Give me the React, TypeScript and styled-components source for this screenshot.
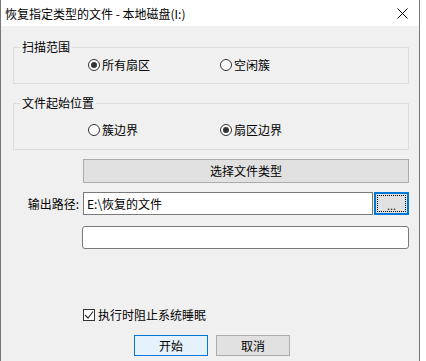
import React from "react";
import styled, { createGlobalStyle } from "styled-components";

const Global = createGlobalStyle`
  html, body { margin: 0; padding: 0; background: #ffffff; }
  body { font-family: "Noto Sans CJK SC", "Noto Sans", sans-serif; font-size: 12px; color: #000; }
  * { box-sizing: border-box; }
`;

const Window = styled.div`
  width: 420px;
  height: 361px;
  border-left: 1px solid #777777;
  border-right: 1px solid #777777;
  display: flex;
  flex-direction: column;
  overflow: hidden;
`;

const TitleBar = styled.div`
  height: 26px;
  background: #ffffff;
  display: flex;
  align-items: center;
  padding-left: 4px;
  flex-shrink: 0;
`;

const TitleText = styled.div`
  flex: 1;
  font-size: 12px;
  line-height: 14px;
  padding-top: 1px;
  white-space: nowrap;
`;

const CloseBox = styled.div`
  width: 46px;
  height: 26px;
  display: flex;
  align-items: center;
  justify-content: center;
  padding-left: 12px;
`;

const Body = styled.div`
  flex: 1;
  background: #f0f0f0;
  padding: 14px 10px 0 12px;
  display: flex;
  flex-direction: column;
`;

const Group = styled.fieldset<{ $gapTop: number; $padBottom: number; $rowTop: number }>`
  margin: ${(p) => p.$gapTop}px 0 0 0;
  padding: 0 0 ${(p) => p.$padBottom}px 6px;
  border: 1px solid #dcdcdc;
  min-width: 0;
  & > div { margin-top: ${(p) => p.$rowTop}px; }
`;

const Legend = styled.legend`
  padding: 0 2px;
  font-size: 12px;
  line-height: 14px;
`;

const RadioRow = styled.div`
  display: grid;
  grid-template-columns: 132px auto;
  padding-left: 68px;
  height: 14px;
  align-items: center;
`;

const Choice = styled.label`
  display: flex;
  align-items: center;
  gap: 2px;
  line-height: 14px;
`;

const RadioDot = styled.span<{ $on?: boolean }>`
  width: 12px;
  height: 12px;
  border-radius: 50%;
  border: 1px solid #333333;
  background: #ffffff;
  display: flex;
  align-items: center;
  justify-content: center;
  &::after {
    content: "";
    width: 6px;
    height: 6px;
    border-radius: 50%;
    background: ${(p) => (p.$on ? "#333333" : "transparent")};
  }
`;

const WideButton = styled.div`
  margin: 9px 0 0 70px;
  height: 24px;
  background: #e1e1e1;
  border: 1px solid #adadad;
  display: flex;
  align-items: center;
  justify-content: center;
  line-height: 14px;
`;

const PathRow = styled.div`
  margin-top: 9px;
  display: grid;
  grid-template-columns: 70px 1fr 35px;
  column-gap: 1px;
  height: 23px;
`;

const PathLabel = styled.div`
  display: flex;
  align-items: center;
  justify-content: flex-end;
  padding-right: 4px;
  line-height: 14px;
`;

const TextBox = styled.div`
  background: #ffffff;
  border: 1px solid #7a7a7a;
  display: flex;
  align-items: center;
  padding-left: 3px;
  line-height: 14px;
  margin-left: -1px;
`;

const BrowseButton = styled.div`
  position: relative;
  background: #e1e1e1;
  border: 2px solid #0078d7;
  display: flex;
  align-items: center;
  justify-content: center;
  font-size: 11px;
  line-height: 12px;
  padding-top: 2px;
  color: #222;
  &::after {
    content: "";
    position: absolute;
    inset: 1px;
    border: 1px dotted #000000;
  }
`;

const StatusBox = styled.div`
  margin: 11px 0 0 69px;
  height: 23px;
  background: #ffffff;
  border: 1px solid #7a7a7a;
  border-radius: 3px;
`;

const CheckRow = styled.label`
  margin: 59px 0 0 70px;
  display: flex;
  align-items: center;
  gap: 3px;
  height: 14px;
  line-height: 14px;
`;

const CheckBox = styled.span`
  width: 12px;
  height: 12px;
  border: 1px solid #333333;
  background: #ffffff;
  display: flex;
  align-items: center;
  justify-content: center;
`;

const ButtonRow = styled.div`
  margin: 13px 0 0 121px;
  display: flex;
  gap: 8px;
`;

const DialogButton = styled.div<{ $primary?: boolean }>`
  width: 74px;
  height: 21px;
  background: ${(p) => (p.$primary ? "#e5f1fb" : "#e1e1e1")};
  border: 1px solid ${(p) => (p.$primary ? "#0078d7" : "#adadad")};
  display: flex;
  align-items: center;
  justify-content: center;
  line-height: 14px;
`;

export default function App() {
  return (
    <>
      <Global />
      <Window>
        <TitleBar>
          <TitleText>恢复指定类型的文件 - 本地磁盘(I:)</TitleText>
          <CloseBox>
            <svg width="11" height="11" viewBox="0 0 11 11">
              <path d="M0.5 0.5 L10.5 10.5 M10.5 0.5 L0.5 10.5" stroke="#000" strokeWidth="1" />
            </svg>
          </CloseBox>
        </TitleBar>
        <Body>
          <Group $gapTop={0} $padBottom={11} $rowTop={4}>
            <Legend>扫描范围</Legend>
            <RadioRow>
              <Choice>
                <RadioDot $on />
                所有扇区
              </Choice>
              <Choice>
                <RadioDot />
                空闲簇
              </Choice>
            </RadioRow>
          </Group>
          <Group $gapTop={12} $padBottom={12} $rowTop={13}>
            <Legend>文件起始位置</Legend>
            <RadioRow>
              <Choice>
                <RadioDot />
                簇边界
              </Choice>
              <Choice>
                <RadioDot $on />
                扇区边界
              </Choice>
            </RadioRow>
          </Group>
          <WideButton>选择文件类型</WideButton>
          <PathRow>
            <PathLabel>输出路径:</PathLabel>
            <TextBox>E:\恢复的文件</TextBox>
            <BrowseButton>...</BrowseButton>
          </PathRow>
          <StatusBox />
          <CheckRow>
            <CheckBox>
              <svg width="10" height="10" viewBox="0 0 10 10">
                <path d="M1 5 L4 8 L9 1.5" stroke="#333" strokeWidth="1.2" fill="none" />
              </svg>
            </CheckBox>
            执行时阻止系统睡眠
          </CheckRow>
          <ButtonRow>
            <DialogButton $primary>开始</DialogButton>
            <DialogButton>取消</DialogButton>
          </ButtonRow>
        </Body>
      </Window>
    </>
  );
}
